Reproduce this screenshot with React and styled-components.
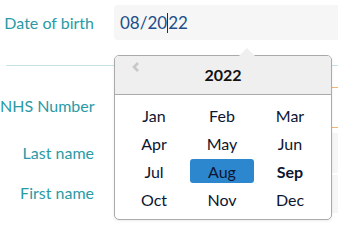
import React from 'react';
import styled, { createGlobalStyle } from 'styled-components';

const months = ['Jan', 'Feb', 'Mar', 'Apr', 'May', 'Jun', 'Jul', 'Aug', 'Sep', 'Oct', 'Nov', 'Dec'];

const GlobalStyle = createGlobalStyle`
  body {
    margin: 0;
    background: #fff;
    font-family: Lato, "Open Sans", sans-serif;
  }
`;

const Page = styled.div`
  position: relative;
  width: 338px;
  height: 226px;
  overflow: hidden;
  padding-top: 5px;
  box-sizing: border-box;
`;

const Row = styled.div`
  display: grid;
  grid-template-columns: 114px 240px;
  align-items: center;
  margin-top: ${(p) => p.gap || 0}px;
`;

const Label = styled.label`
  text-align: right;
  padding-right: 20px;
  padding-bottom: ${(p) => p.lift || 0}px;
  font-size: 16px;
  color: #2a9aa6;
  white-space: nowrap;
`;

const Field = styled.div`
  height: ${(p) => p.h}px;
  box-sizing: border-box;
  background: ${(p) => (p.warn ? '#fff' : '#f6f6f6')};
  border-top: 1px solid ${(p) => (p.warn ? '#f7b27a' : 'transparent')};
  border-bottom: 1px solid ${(p) => (p.warn ? '#f7b27a' : 'transparent')};
  border-radius: 4px;
  display: flex;
  align-items: center;
  padding-left: 6px;
  font-size: 17px;
  color: #1d4e8a;
`;

const Caret = styled.span`
  display: inline-block;
  width: 1px;
  height: 20px;
  background: #1a2f55;
  vertical-align: middle;
`;

const Divider = styled.hr`
  margin: 25px 0 0 6px;
  border: 0;
  border-top: 1px solid #c4e2e5;
`;

const Popup = styled.div`
  position: absolute;
  left: 114px;
  top: 55px;
  width: 218px;
  height: 165px;
  box-sizing: border-box;
  background: #fff;
  border: 1px solid #aaa;
  border-radius: 5px;
  box-shadow: 0 1px 3px rgba(0, 0, 0, 0.08);

  &::before {
    content: '';
    position: absolute;
    top: -8px;
    left: 124px;
    border-left: 8px solid transparent;
    border-right: 8px solid transparent;
    border-bottom: 8px solid #efefef;
  }
`;

const Header = styled.div`
  position: relative;
  height: 39px;
  background: #efefef;
  border-bottom: 1px solid #aaa;
  border-radius: 4px 4px 0 0;
  display: flex;
  align-items: center;
  justify-content: center;
  padding-bottom: 1px;
  box-sizing: border-box;
  font-weight: 700;
  font-size: 16px;
  color: #111;
`;

const Prev = styled.span`
  position: absolute;
  left: 16px;
  top: 5px;
  display: flex;
`;

const Grid = styled.div`
  display: grid;
  grid-template-columns: repeat(3, 64px);
  grid-auto-rows: 24px;
  column-gap: 4px;
  row-gap: 4px;
  padding: 8px 0 0 7px;
`;

const Month = styled.div`
  display: flex;
  align-items: center;
  justify-content: center;
  border-radius: 3px;
  font-size: 16px;
  color: #0d1530;
  font-weight: ${(p) => (p.today ? 700 : 400)};
  background: ${(p) => (p.active ? '#2d87cf' : 'transparent')};
`;

export default function App() {
  return (
    <Page>
      <GlobalStyle />
      <Row>
        <Label>Date of birth</Label>
        <Field h={35}>
          08/20<Caret />22
        </Field>
      </Row>
      <Divider />
      <Row gap={21}>
        <Label lift={4}>NHS Number</Label>
        <Field h={41} warn />
      </Row>
      <Row gap={5}>
        <Label lift={2}>Last name</Label>
        <Field h={40} />
      </Row>
      <Row gap={2}>
        <Label lift={3}>First name</Label>
        <Field h={38} />
      </Row>

      <Popup>
        <Header>
          <Prev>
            <svg width="10" height="12" viewBox="0 0 10 12">
              <path d="M7 2 L3 6 L7 10" fill="none" stroke="#c8c8c8" strokeWidth="2.6" />
            </svg>
          </Prev>
          2022
        </Header>
        <Grid>
          {months.map((m) => (
            <Month key={m} active={m === 'Aug'} today={m === 'Sep'}>
              {m}
            </Month>
          ))}
        </Grid>
      </Popup>
    </Page>
  );
}
